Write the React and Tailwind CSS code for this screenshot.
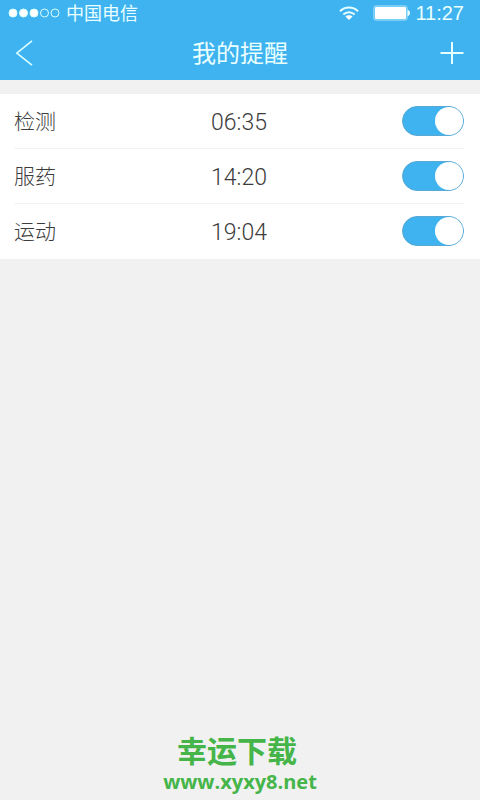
import React, { useState } from "react";

const initialReminders = [
  { id: "check", label: "检测", time: "06:35", enabled: true },
  { id: "medicine", label: "服药", time: "14:20", enabled: true },
  { id: "sport", label: "运动", time: "19:04", enabled: true },
];

const StatusBar = () => (
  <div className="flex h-[26px] items-center justify-between pl-2 pr-4">
    <div className="flex items-center gap-1.5">
      <svg width="52" height="10" viewBox="0 0 52 10" fill="none" stroke="#d9ffff" aria-hidden="true">
        <circle cx="5" cy="5" r="4" fill="#fff" />
        <circle cx="15.5" cy="5" r="4" fill="#fff" />
        <circle cx="26" cy="5" r="4" fill="#fff" />
        <circle cx="36.5" cy="5" r="4" />
        <circle cx="47" cy="5" r="4" />
      </svg>
      <span className="pt-0.5 text-lg leading-6">中国电信</span>
    </div>
    <div className="flex items-center">
      <svg width="20" height="14" viewBox="0 0 20 14" fill="none" stroke="#e6ffff" strokeWidth="2" className="mr-3.5" aria-hidden="true">
        <path d="M1 5.2C6 .2 14 .2 19 5.2" />
        <path d="M4.4 8.6c3.2-3 8-3 11.2 0" />
        <path d="M10 14 6.4 10.6c1.8-1.8 5.4-1.8 7.2 0Z" fill="#fff" stroke="none" />
      </svg>
      <svg width="38" height="16" viewBox="0 0 38 16" className="mr-1" aria-hidden="true">
        <rect x="1" y="1" width="33" height="14" rx="1.5" fill="none" stroke="#b5e8fb" strokeWidth="1" />
        <rect x="2" y="2" width="31" height="12" rx="1" fill="#fff" />
        <path d="M34.5 5c3.4.4 3.4 5.6 0 6Z" fill="#e6ffff" />
      </svg>
      <span className="font-['Liberation_Sans',sans-serif] text-xl leading-6">11:27</span>
    </div>
  </div>
);

const Header = () => (
  <header className="bg-[#3eb3f0] text-[#eaffff]">
    <StatusBar />
    <div className="grid h-[54px] grid-cols-[1fr_auto_1fr] items-center px-4">
      <button type="button" aria-label="返回" className="justify-self-start">
        <svg width="17" height="26" viewBox="0 0 17 26" fill="none" stroke="#d9ffff" strokeWidth="1.6">
          <path d="M16 .8.8 13.2 16 25.2" />
        </svg>
      </button>
      <h1 className="pt-0.5 text-2xl font-normal">我的提醒</h1>
      <button type="button" aria-label="添加" className="justify-self-end">
        <svg width="24" height="24" viewBox="0 0 24 24" fill="none" stroke="#e6ffff" strokeWidth="2">
          <path d="M12 1v22M.5 12h23" />
        </svg>
      </button>
    </div>
  </header>
);

const ReminderRow = ({ reminder, onToggle }) => (
  <li className="grid h-[55px] grid-cols-[1fr_auto_1fr] items-center border-b border-[#f3f3f3] last:border-transparent">
    <label htmlFor={reminder.id} className="pt-1 text-[21px]">{reminder.label}</label>
    <time className="pt-1 text-[23px]">{reminder.time}</time>
    <input
      id={reminder.id}
      type="checkbox"
      role="switch"
      checked={reminder.enabled}
      onChange={() => onToggle(reminder.id)}
      className="flex h-[30px] w-[62px] cursor-pointer appearance-none items-center justify-self-end rounded-full border border-[#5aa9d3] bg-gray-200 before:size-7 before:rounded-full before:bg-white checked:justify-end checked:bg-[#3eb3f0]"
    />
  </li>
);

const App = () => {
  const [reminders, setReminders] = useState(initialReminders);

  const handleToggle = (id) => {
    setReminders(reminders.map((r) => (r.id === id ? { ...r, enabled: !r.enabled } : r)));
  };

  return (
    <div className="flex min-h-screen flex-col bg-[#f1f1f1] font-['Roboto','Noto_Sans_CJK_SC',sans-serif]">
      <Header />
      <main className="mt-3.5 bg-white pl-3.5 pr-4 font-light text-[#3c3c3c]">
        <ul>
          {reminders.map((reminder) => (
            <ReminderRow key={reminder.id} reminder={reminder} onToggle={handleToggle} />
          ))}
        </ul>
      </main>
      <footer className="mt-auto pb-1 text-center font-bold text-[#45b549]">
        <p className="pr-1.5 text-[30px] leading-8">幸运下载</p>
        <p className="font-['Open_Sans',sans-serif] text-xl leading-7">www.xyxy8.net</p>
      </footer>
    </div>
  );
};

export default App;
